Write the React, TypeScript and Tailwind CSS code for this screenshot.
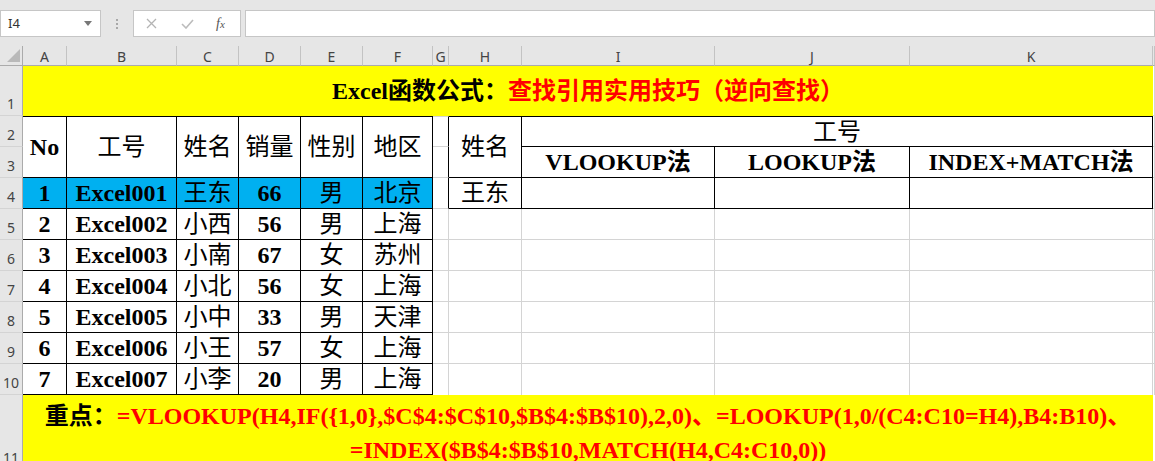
import React from "react";

type Edge = "k" | "g" | "n";

const R: Record<Edge, string> = {
  k: "border-r border-r-black",
  g: "border-r border-r-[#d4d4d4]",
  n: "",
};
const B: Record<Edge, string> = {
  k: "border-b border-b-black",
  g: "border-b border-b-[#d4d4d4]",
  n: "",
};
const T: Record<Edge, string> = {
  k: "border-t border-t-black",
  g: "border-t border-t-[#d4d4d4]",
  n: "",
};

interface CellProps {
  r?: Edge;
  b?: Edge;
  t?: Edge;
  className?: string;
  children?: React.ReactNode;
}

function Cell({ r = "g", b = "g", t = "n", className = "", children }: CellProps) {
  return (
    <div
      className={`flex items-center justify-center whitespace-nowrap ${R[r]} ${B[b]} ${T[t]} ${className}`}
    >
      {children}
    </div>
  );
}

function RowHead({ n }: { n: number }) {
  return (
    <div className="flex items-end justify-center pb-[4px] bg-[#e6e6e6] border-r border-b border-r-[#ababab] border-b-[#d4d4d4] text-[14px] leading-none text-[#444] font-['Noto_Sans',sans-serif]">
      {n}
    </div>
  );
}

const cols = ["A", "B", "C", "D", "E", "F", "G", "H", "I", "J", "K", ""];

const rows = [
  ["1", "Excel001", "王东", "66", "男", "北京"],
  ["2", "Excel002", "小西", "56", "男", "上海"],
  ["3", "Excel003", "小南", "67", "女", "苏州"],
  ["4", "Excel004", "小北", "56", "女", "上海"],
  ["5", "Excel005", "小中", "33", "男", "天津"],
  ["6", "Excel006", "小王", "57", "女", "上海"],
  ["7", "Excel007", "小李", "20", "男", "上海"],
];

function Toolbar() {
  return (
    <div className="h-[46px] bg-[#e6e6e6] flex items-start pt-[10px]">
      <div className="w-[101px] h-[27px] bg-white border border-[#c6c6c6] flex items-center justify-between pl-[7px] pr-[8px] text-[13px] text-[#333] font-['Noto_Sans',sans-serif]">
        <span>I4</span>
        <svg width="8" height="5" viewBox="0 0 8 5">
          <path d="M0 0h8L4 5z" fill="#777" />
        </svg>
      </div>
      <div className="w-[32px] h-[27px] flex flex-col items-center justify-center gap-[2px]">
        <span className="w-[2px] h-[2px] bg-[#a8a8a8]" />
        <span className="w-[2px] h-[2px] bg-[#a8a8a8]" />
        <span className="w-[2px] h-[2px] bg-[#a8a8a8]" />
      </div>
      <div className="w-[108px] h-[27px] bg-white border border-[#c6c6c6] flex items-center">
        <svg className="ml-[12px]" width="11" height="11" viewBox="0 0 11 11">
          <path d="M1 1l9 9M10 1l-9 9" stroke="#b4b4b4" strokeWidth="1.3" />
        </svg>
        <svg className="ml-[24px]" width="13" height="10" viewBox="0 0 13 10">
          <path d="M1 5l4 4 7-8" stroke="#bcbcbc" strokeWidth="1.6" fill="none" />
        </svg>
        <span className="ml-[22px] italic text-[14px] text-[#555] font-['Liberation_Serif',serif]">
          f<span className="text-[11px]">x</span>
        </span>
      </div>
      <div className="ml-[4px] flex-1 h-[27px] bg-white border border-[#c6c6c6]" />
    </div>
  );
}

export default function App() {
  const serif = "font-['Liberation_Serif','Noto_Sans_CJK_SC',serif]";
  return (
    <div className="w-[1155px] h-[461px] overflow-hidden bg-white">
      <Toolbar />
      <div
        className={`grid grid-cols-[23px_44px_110px_62px_62px_62px_70px_16px_73px_193px_195px_243px_1fr] grid-rows-[20px_50px_31px_31px_31px_31px_31px_31px_31px_31px_31px_75px] text-[24px] leading-none text-black ${serif}`}
      >
        {/* column headers */}
        <div className="relative bg-[#e6e6e6] border-r border-b border-r-[#ababab] border-b-[#ababab]">
          <svg className="absolute right-[2px] bottom-[3px]" width="13" height="13" viewBox="0 0 13 13">
            <path d="M13 0V13H0z" fill="#b9b9b9" />
          </svg>
        </div>
        {cols.map((c, i) => (
          <div
            key={i}
            className="flex items-center justify-center pt-[3px] bg-[#e6e6e6] border-r border-b border-r-[#c3c3c3] border-b-[#ababab] text-[14px] leading-none text-[#444] font-['Noto_Sans',sans-serif]"
          >
            {c}
          </div>
        ))}

        {/* row 1 */}
        <RowHead n={1} />
        <div className="col-span-11 flex items-center justify-center bg-[#ffff00] font-bold">
          <span>Excel函数公式：</span>
          <span className="text-[#ff0000]">查找引用实用技巧（逆向查找）</span>
        </div>
        <Cell r="g" b="g" />

        {/* row 2 */}
        <RowHead n={2} />
        <Cell r="k" b="k" t="k" className="row-span-2 font-bold">No</Cell>
        <Cell r="k" b="k" t="k" className="row-span-2">工号</Cell>
        <Cell r="k" b="k" t="k" className="row-span-2">姓名</Cell>
        <Cell r="k" b="k" t="k" className="row-span-2">销量</Cell>
        <Cell r="k" b="k" t="k" className="row-span-2">性别</Cell>
        <Cell r="k" b="k" t="k" className="row-span-2">地区</Cell>
        <Cell r="k" b="g" t="g" />
        <Cell r="k" b="k" t="k" className="row-span-2">姓名</Cell>
        <Cell r="k" b="k" t="k" className="col-span-3">工号</Cell>
        <Cell r="g" b="g" />

        {/* row 3 */}
        <RowHead n={3} />
        <Cell r="k" b="g" />
        <Cell r="k" b="k" className="font-bold">VLOOKUP法</Cell>
        <Cell r="k" b="k" className="font-bold">LOOKUP法</Cell>
        <Cell r="k" b="k" className="font-bold">INDEX+MATCH法</Cell>
        <Cell r="g" b="g" />

        {/* data rows */}
        {rows.map((row, ri) => {
          const blue = ri === 0;
          const last = ri === rows.length - 1;
          const bg = blue ? "bg-[#00b0f0]" : "";
          return (
            <React.Fragment key={ri}>
              <RowHead n={ri + 4} />
              <Cell r="k" b="k" className={`font-bold ${bg}`}>{row[0]}</Cell>
              <Cell r="k" b="k" className={`font-bold ${bg}`}>{row[1]}</Cell>
              <Cell r="k" b="k" className={bg}>{row[2]}</Cell>
              <Cell r="k" b="k" className={`font-bold ${bg}`}>{row[3]}</Cell>
              <Cell r="k" b="k" className={bg}>{row[4]}</Cell>
              <Cell r="k" b="k" className={bg}>{row[5]}</Cell>
              <Cell r={blue ? "k" : "g"} b={last ? "n" : "g"} />
              <Cell r={blue ? "k" : "g"} b={blue ? "k" : last ? "n" : "g"}>{blue ? "王东" : null}</Cell>
              <Cell r={blue ? "k" : "g"} b={blue ? "k" : last ? "n" : "g"} />
              <Cell r={blue ? "k" : "g"} b={blue ? "k" : last ? "n" : "g"} />
              <Cell r={blue ? "k" : "g"} b={blue ? "k" : last ? "n" : "g"} />
              <Cell r="g" b={last ? "n" : "g"} />
            </React.Fragment>
          );
        })}

        {/* row 11 */}
        <RowHead n={11} />
        <div className="col-span-11 flex items-center justify-center bg-[#ffff00] font-bold text-[#ff0000] leading-[34px] whitespace-nowrap">
          <div className="text-center">
            <span className="text-black">重点：</span>
            =VLOOKUP(H4,IF({"{"}1,0{"}"},$C$4:$C$10,$B$4:$B$10),2,0)、=LOOKUP(1,0/(C4:C10=H4),B4:B10)、
            <br />
            =INDEX($B$4:$B$10,MATCH(H4,C4:C10,0))
          </div>
        </div>
        <div className="bg-white" />
      </div>
    </div>
  );
}
